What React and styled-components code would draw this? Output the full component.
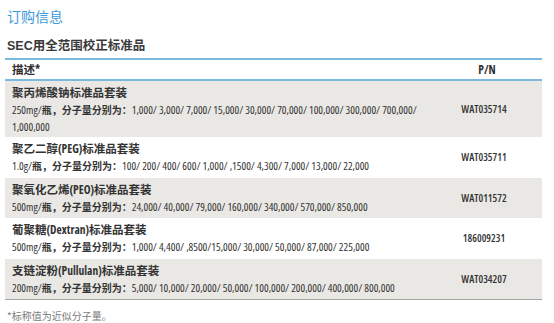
import React from "react";
import styled, { createGlobalStyle } from "styled-components";

const Global = createGlobalStyle`
  html, body { margin: 0; padding: 0; background: #ffffff; }
  body { font-family: "Liberation Sans", "Noto Sans CJK SC", sans-serif; color: #333; }
`;

const narrow = `
  font-family: "Open Sans", "Noto Sans CJK SC", sans-serif;
  font-stretch: 75%;
`;

const Page = styled.div`
  width: 554px;
  height: 323px;
  box-sizing: border-box;
  padding: 0 12px 0 5px;
  overflow: hidden;
`;

const Title = styled.h1`
  margin: 6px 0 0 2px;
  font-family: "Noto Sans CJK SC", sans-serif;
  font-weight: 400;
  font-size: 14px;
  line-height: 20px;
  color: #3b9ad8;
`;

const Subtitle = styled.h2`
  margin: 11px 0 0 2px;
  font-family: "Liberation Sans", "Noto Sans CJK SC", sans-serif;
  font-weight: 700;
  font-size: 12.5px;
  line-height: 18px;
  color: #3a3a3a;
`;

const Table = styled.div`
  margin-top: 3px;
  border-top: 2px solid #7cb9e0;
  border-bottom: 1px solid #a5a5a5;
`;

const Row = styled.div`
  display: grid;
  grid-template-columns: minmax(0, 1fr) 116px;
  align-items: center;
  background: ${(p) => (p.$shade ? "#e9e8e5" : "#ffffff")};
`;

const HeadRow = styled(Row)`
  height: 19px;
  border-bottom: 2px solid #7cb9e0;
`;

const HeadCell = styled.div`
  ${narrow}
  padding-left: ${(p) => (p.$center ? "6px" : "7px")};
  text-align: ${(p) => (p.$center ? "center" : "left")};
  font-weight: 700;
  font-size: 11.5px;
  line-height: 19px;
  color: #2e2e2e;
`;

const Desc = styled.div`
  padding: 3px 0 3px 7px;
  min-width: 0;
`;

const ItemName = styled.div`
  ${narrow}
  font-weight: 700;
  font-size: 11.5px;
  line-height: 18px;
  color: #333;
  white-space: nowrap;
`;

const ItemSpec = styled.div`
  ${narrow}
  font-size: 11px;
  line-height: 15.5px;
  color: #333;
  white-space: nowrap;
`;

const Label = styled.span`
  font-weight: 700;
  font-size: 10px;
`;

const PartNo = styled.div`
  ${narrow}
  text-align: center;
  font-size: 10.5px;
  font-weight: 600;
  color: #333;
`;

const Note = styled.div`
  margin: 8px 0 0 2px;
  font-family: "Noto Sans CJK SC", sans-serif;
  font-size: 10px;
  line-height: 16px;
  color: #7a7a7a;
`;

const items = [
  {
    name: "聚丙烯酸钠标准品套装",
    unit: "250mg/",
    values: ["1,000/ 3,000/ 7,000/ 15,000/ 30,000/ 70,000/ 100,000/ 300,000/ 700,000/", "1,000,000"],
    pn: "WAT035714",
  },
  {
    name: "聚乙二醇(PEG)标准品套装",
    unit: "1.0g/",
    values: ["100/ 200/ 400/ 600/ 1,000/ ,1500/ 4,300/ 7,000/ 13,000/ 22,000"],
    pn: "WAT035711",
  },
  {
    name: "聚氧化乙烯(PEO)标准品套装",
    unit: "500mg/",
    values: ["24,000/ 40,000/ 79,000/ 160,000/ 340,000/ 570,000/ 850,000"],
    pn: "WAT011572",
  },
  {
    name: "葡聚糖(Dextran)标准品套装",
    unit: "500mg/",
    values: ["1,000/ 4,400/ ,8500/15,000/ 30,000/ 50,000/ 87,000/ 225,000"],
    pn: "186009231",
  },
  {
    name: "支链淀粉(Pullulan)标准品套装",
    unit: "200mg/",
    values: ["5,000/ 10,000/ 20,000/ 50,000/ 100,000/ 200,000/ 400,000/ 800,000"],
    pn: "WAT034207",
  },
];

export default function App() {
  return (
    <>
      <Global />
      <Page>
        <Title>订购信息</Title>
        <Subtitle>SEC用全范围校正标准品</Subtitle>
        <Table>
          <HeadRow>
            <HeadCell>描述*</HeadCell>
            <HeadCell $center>P/N</HeadCell>
          </HeadRow>
          {items.map((it, i) => (
            <Row key={it.pn} $shade={i % 2 === 0}>
              <Desc>
                <ItemName>{it.name}</ItemName>
                <ItemSpec>
                  {it.unit}
                  <Label>瓶，分子量分别为：</Label>
                  {it.values[0]}
                </ItemSpec>
                {it.values.slice(1).map((v) => (
                  <ItemSpec key={v}>{v}</ItemSpec>
                ))}
              </Desc>
              <PartNo>{it.pn}</PartNo>
            </Row>
          ))}
        </Table>
        <Note>*标称值为近似分子量。</Note>
      </Page>
    </>
  );
}
